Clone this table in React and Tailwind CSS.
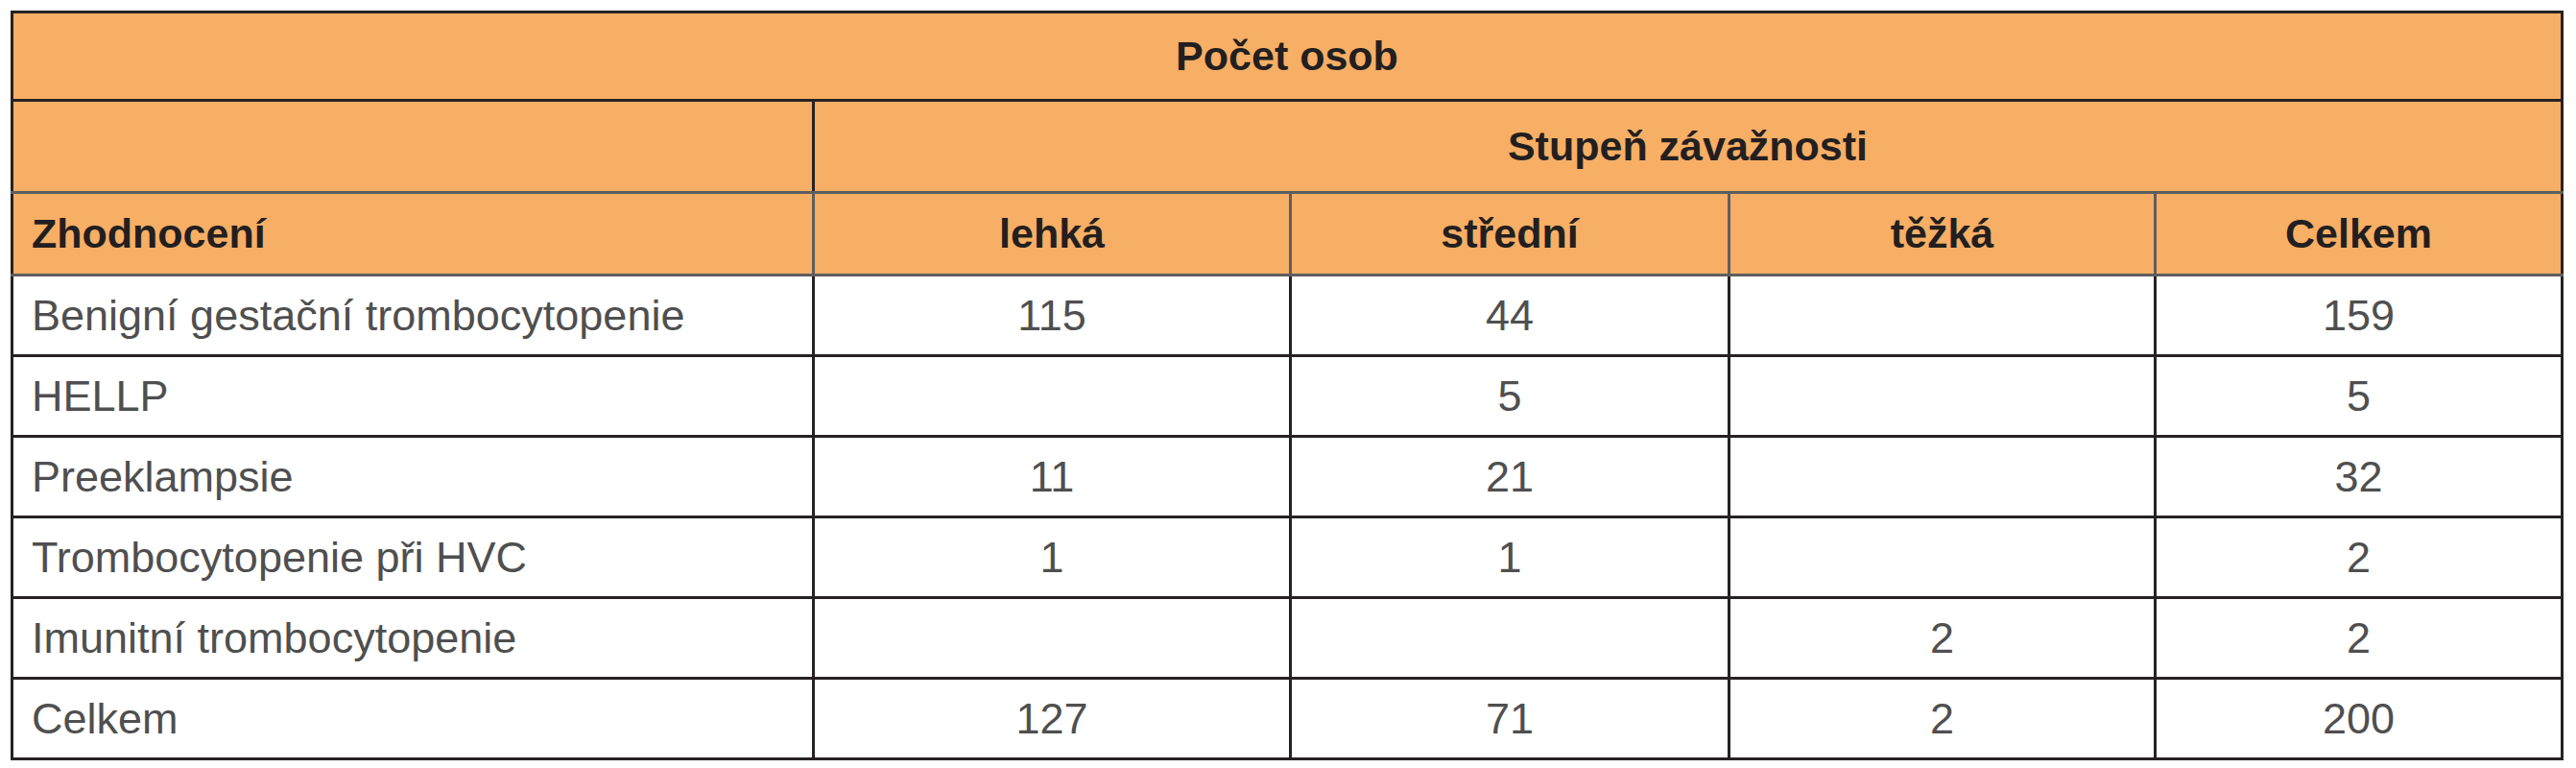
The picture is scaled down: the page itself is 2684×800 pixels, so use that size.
import React from "react";

const rows = [
  ["Benigní gestační trombocytopenie", "115", "44", "", "159"],
  ["HELLP", "", "5", "", "5"],
  ["Preeklampsie", "11", "21", "", "32"],
  ["Trombocytopenie při HVC", "1", "1", "", "2"],
  ["Imunitní trombocytopenie", "", "", "2", "2"],
  ["Celkem", "127", "71", "2", "200"],
];

const dark = "border-[#262223]";

export default function App() {
  return (
    <div
      className="bg-white w-[2684px] h-[800px] pt-[11px] pl-[11px]"
      style={{ fontFamily: '"Liberation Sans", Arial, sans-serif' }}
    >
      <table className={`border-collapse table-fixed w-[2657px] border-[3px] ${dark}`}>
        <colgroup>
          <col className="w-[835px]" />
          <col className="w-[497px]" />
          <col className="w-[457px]" />
          <col className="w-[444px]" />
          <col className="w-[424px]" />
        </colgroup>
        <thead className="bg-[#f7ae65] text-[#231f20] font-bold text-[43px]">
          <tr>
            <th colSpan={5} className={`h-[92px] border-[3px] ${dark} text-center font-bold`}>
              Počet osob
            </th>
          </tr>
          <tr>
            <th className={`h-[96px] border-[3px] ${dark} border-b-[#5e5e5e]`}></th>
            <th colSpan={4} className={`h-[96px] border-[3px] ${dark} border-b-[#5e5e5e] text-center font-bold`}>
              Stupeň závažnosti
            </th>
          </tr>
          <tr>
            <th className={`h-[86px] border-[3px] border-[#5e5e5e] border-l-[#262223] text-left pl-[19px] font-bold`}>
              Zhodnocení
            </th>
            <th className="h-[86px] border-[3px] border-[#5e5e5e] text-center font-bold">lehká</th>
            <th className="h-[86px] border-[3px] border-[#5e5e5e] text-center font-bold">střední</th>
            <th className="h-[86px] border-[3px] border-[#5e5e5e] text-center font-bold">těžká</th>
            <th className="h-[86px] border-[3px] border-[#5e5e5e] border-r-[#262223] text-center font-bold">
              Celkem
            </th>
          </tr>
        </thead>
        <tbody className="text-[#4f4f4f] text-[45px]">
          {rows.map((r) => (
            <tr key={r[0]}>
              {r.map((c, i) => (
                <td
                  key={i}
                  className={`h-[84px] border-[3px] ${dark} ${i === 0 ? "text-left pl-[19px]" : "text-center"}`}
                >
                  {c}
                </td>
              ))}
            </tr>
          ))}
        </tbody>
      </table>
    </div>
  );
}
